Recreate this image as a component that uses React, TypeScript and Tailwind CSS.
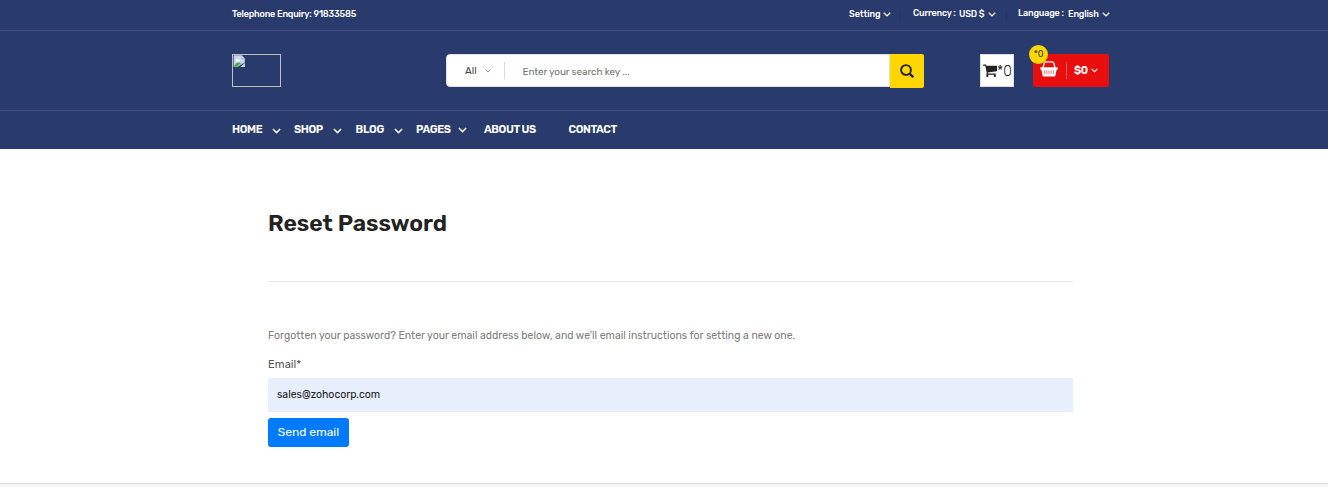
function Chevron({ className }: { className: string }) {
  return (
    <svg viewBox="0 0 10 6" className={className} fill="none" stroke="currentColor" strokeWidth="1.600">
      <path d="M1 .8l4 4L9 .8" />
    </svg>
  );
}

function BrokenImage() {
  return (
    <svg viewBox="0 0 14 14" className="h-[13px] w-[13px]">
      <path d="M1 .5h8.500L12.500 4v4L8 10.500 5 12.500H1z" fill="#c8d8f8" stroke="#b4bac6" strokeWidth=".8" />
      <path d="M9.500.5V4h3z" fill="#fff" stroke="#8f959f" strokeWidth=".7" />
      <path d="M3 6c0-1.500 2-2.200 3-1 1.600-.3 2 1.800.7 2H3.400C2.600 7 2.500 6.200 3 6z" fill="#fff" />
      <path d="M1 12.500c1-3 3-4.500 5-4.500 1.500 0 2 .6 3 .3L4.500 12.500z" fill="#4daf35" />
      <path d="M8 12.800L12.800 8.500v4.300z" fill="#d5dce4" />
    </svg>
  );
}

function Cart() {
  return (
    <svg viewBox="64 192 1664 1472" className="h-[13px] w-[14px] shrink-0" fill="currentColor" preserveAspectRatio="none">
      <path d="M704 1536q0 52-38 90t-90 38-90-38-38-90 38-90 90-38 90 38 38 90zm896 0q0 52-38 90t-90 38-90-38-38-90 38-90 90-38 90 38 38 90zm128-1088v512q0 24-16.500 42.500t-40.500 21.500l-1044 122q13 60 13 70 0 16-24 64h920q26 0 45 19t19 45-19 45-45 19h-1024q-26 0-45-19t-19-45q0-11 8-31.500t16-36 21.500-40 15.500-29.500l-177-823h-204q-26 0-45-19t-19-45 19-45 45-19h256q16 0 28.500 6.500t19.500 15.500 13 24.500 8 26 5.500 29.500 4.500 26h1201q26 0 45 19t19 45z" />
    </svg>
  );
}

function Basket() {
  return (
    <svg viewBox="0 0 18 16" className="-mt-[3px] h-[16px] w-[18px]">
      <path d="M3 7L4 2.500Q4.300.9 6 .9h6q1.700 0 2 1.600L15 7" fill="none" stroke="#fff" strokeWidth="1.300" />
      <path d="M.4 6.200h17.200v2.500H16.600L15.400 14.400q-.2 1.200-1.400 1.200H4q-1.200 0-1.400-1.200L1.400 8.700H.4z" fill="#fff" />
      <path d="M4.300 9.200l.5 4M6.700 9.200l.2 4M9 9.200v4M11.300 9.200l-.2 4M13.700 9.200l-.5 4" stroke="#f28080" strokeWidth="1" />
    </svg>
  );
}

export default function App() {
  return (
    <div className="flex h-[487px] flex-col overflow-hidden bg-white font-['Rubik','Roboto',sans-serif] text-[#222]">
      <header className="bg-[#293a6c] text-white">
        <div className="h-[31px] border-b border-[#3e4d7b]">
          <div className="ml-[232px] flex h-[28px] w-[878px] items-center text-[9px] leading-[14px] font-medium tracking-[-0.18px] whitespace-nowrap">
            <span className="w-[617px]">Telephone Enquiry: 91833585</span>
            <span className="w-[34px] tracking-[-0.100px]">Setting</span>
            <Chevron className="h-[5px] w-[8px]" />
            <span className="mt-[4px] ml-[9px] h-[10px] w-px bg-[#24345f]" />
            <span className="ml-[12px] w-[46px] pb-[2px]">Currency :</span>
            <span className="w-[29px]">USD $</span>
            <Chevron className="h-[5px] w-[8px]" />
            <span className="mt-[4px] ml-[10px] h-[10px] w-px bg-[#24345f]" />
            <span className="ml-[11px] w-[50px] pb-[2px]">Language :</span>
            <span className="w-[34px]">English</span>
            <Chevron className="h-[5px] w-[8px]" />
          </div>
        </div>
        <div className="h-[80px] border-b border-[#3e4d7b]">
          <div className="ml-[232px] flex w-[877px] pt-[23px]">
            <div className="h-[33px] w-[49px] border border-[#c0c0c0]">
              <BrokenImage />
            </div>
            <div className="ml-[165px] flex h-[34px] w-[478px]">
              <div className="flex h-[33px] w-[444px] items-center rounded-l-[4px] border border-[#e2e2e5] bg-white pl-[18px] text-[#444]">
                <span className="w-[20px] pt-px text-[10px]">All</span>
                <Chevron className="h-[4px] w-[6px] text-[#888]" />
                <span className="ml-[13px] h-[17px] w-px bg-[#d8d8d8]" />
                <span className="ml-[17.500px] pt-[3px] text-[10px] tracking-[-0.12px] text-[#777]">Enter your search key ...</span>
              </div>
              <div className="flex w-[34px] items-center justify-center rounded-r-[2px] bg-[#ffd600]">
                <svg viewBox="0 0 14 14" className="h-[14px] w-[14px]" fill="none" stroke="#222">
                  <circle cx="6" cy="6" r="4.900" strokeWidth="1.900" />
                  <path d="M9.600 9.600l3.700 3.700" strokeWidth="2.300" />
                </svg>
              </div>
            </div>
            <div className="ml-[56px] flex h-[33px] w-[34px] items-center border border-[#ddd] bg-white pl-[2px] text-[#222]">
              <Cart />
              <span className="pt-[2px] text-[14px] font-light">*0</span>
            </div>
            <div className="relative ml-[19px] flex h-[33px] w-[76px] items-center rounded-[2px] bg-[#e90e0e] pl-[7px]">
              <Basket />
              <span className="ml-[8px] h-[17px] w-px bg-[#f16464]" />
              <span className="ml-[7px] w-[17px] pt-px text-[11px] font-semibold tracking-[-0.400px]">$0</span>
              <Chevron className="h-[5px] w-[7px]" />
              <span className="absolute -top-[9px] -left-[4px] flex h-[19px] w-[19px] items-center justify-center rounded-full bg-[#ffd600] text-[9px] text-[#333]">*0</span>
            </div>
          </div>
        </div>
        <nav className="ml-[232px] flex h-[38px] items-center text-[11px] font-semibold tracking-[-0.400px] whitespace-nowrap">
          <span className="w-[40px]">HOME</span>
          <Chevron className="mt-[2px] h-[6px] w-[9px]" />
          <span className="ml-[13px] w-[39px]">SHOP</span>
          <Chevron className="mt-[2px] h-[6px] w-[9px]" />
          <span className="ml-[13.500px] w-[38.500px] tracking-[-0.250px]">BLOG</span>
          <Chevron className="mt-[2px] h-[6px] w-[9px]" />
          <span className="ml-[13px] w-[42px] tracking-[-0.350px]">PAGES</span>
          <Chevron className="h-[6px] w-[9px]" />
          <span className="ml-[17px] w-[84.500px]">ABOUT US</span>
          <span>CONTACT</span>
        </nav>
      </header>
      <main className="ml-[268px] flex h-[334px] w-[805px] shrink-0 flex-col items-start">
        <h1 className="mt-[59px] text-[23px] leading-[30px] font-semibold tracking-[-0.070px]">Reset Password</h1>
        <hr className="mt-[43px] w-full border-[#ebebeb]" />
        <p className="mt-[45px] text-[10.500px] leading-[18px] text-[#808080]">Forgotten your password? Enter your email address below, and we'll email instructions for setting a new one.</p>
        <label className="mt-[11px] text-[11px] leading-[18px] tracking-[0.100px] text-[#555]">Email*</label>
        <div className="mt-[4px] flex h-[34px] w-full items-center bg-[#e8effc] px-[9px] text-[10.500px] text-[#222]">sales@zohocorp.com</div>
        <button className="mt-[6px] h-[29px] w-[81px] rounded-[3px] bg-[#007bff] pb-px text-[12px] whitespace-nowrap text-white">Send email</button>
      </main>
      <footer className="h-[4px] shrink-0 border-t border-[#dcdcdc] bg-[#f6f6f6]" />
    </div>
  );
}
